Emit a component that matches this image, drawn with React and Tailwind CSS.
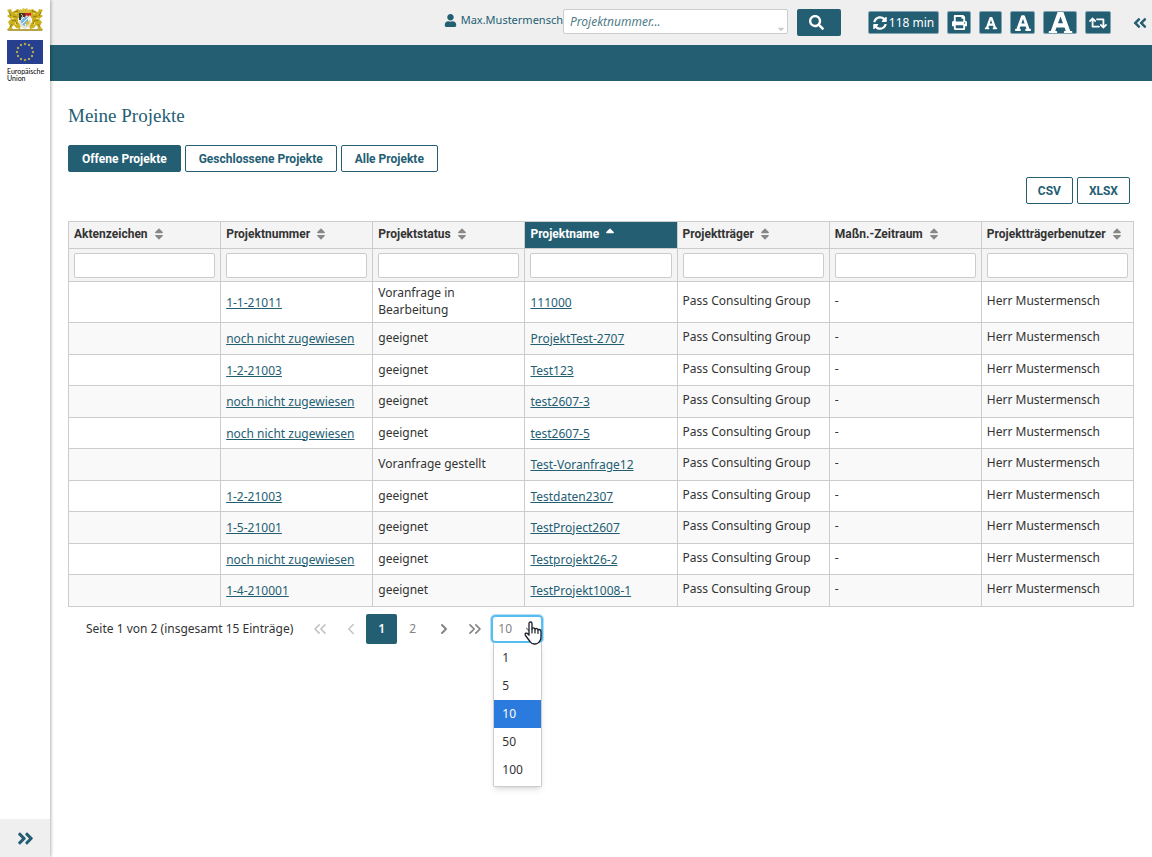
import React, { useState } from 'react';
import {
  FaUser,
  FaSearch,
  FaSyncAlt,
  FaPrint,
  FaRetweet,
  FaFont,
  FaAngleDoubleLeft,
  FaAngleDoubleRight,
  FaSort,
  FaSortUp,
  FaCaretDown,
} from 'react-icons/fa';
import { ChevronDown, ChevronLeft, ChevronRight, ChevronsLeft, ChevronsRight } from 'lucide-react';

const columns = [
  'Aktenzeichen',
  'Projektnummer',
  'Projektstatus',
  'Projektname',
  'Projektträger',
  'Maßn.-Zeitraum',
  'Projektträgerbenutzer',
];

const projects = [
  { number: '1-1-21011', status: 'Voranfrage in Bearbeitung', name: '111000' },
  { number: 'noch nicht zugewiesen', status: 'geeignet', name: 'ProjektTest-2707' },
  { number: '1-2-21003', status: 'geeignet', name: 'Test123' },
  { number: 'noch nicht zugewiesen', status: 'geeignet', name: 'test2607-3' },
  { number: 'noch nicht zugewiesen', status: 'geeignet', name: 'test2607-5' },
  { number: '', status: 'Voranfrage gestellt', name: 'Test-Voranfrage12' },
  { number: '1-2-21003', status: 'geeignet', name: 'Testdaten2307' },
  { number: '1-5-21001', status: 'geeignet', name: 'TestProject2607' },
  { number: 'noch nicht zugewiesen', status: 'geeignet', name: 'Testprojekt26-2' },
  { number: '1-4-210001', status: 'geeignet', name: 'TestProjekt1008-1' },
];

const pageSizes = [1, 5, 10, 50, 100];

const Lion = () => (
  <>
    <path
      d="M0 2 L4 1 L5 4 L8 3 L10 1 L13 2 L14 5 L12 7 L15 9 L14 11 L11 10 L11 14 L14 17 L13 21 L9 20 L7 17 L5 19 L6 22 L0 22 L3 18 L1 14 L4 11 L0 8 L3 6 Z"
      fill="#c9b01c"
    />
    <path d="M7 4 L11 3 M6 8 L10 9 M5 13 L8 12 L10 16 M3 19 L5 16 M2 4 L4 8" stroke="#8f7a16" strokeWidth="1" fill="none" />
    <path d="M8 5 L10 6 M4 10 L7 11 M8 14 L9 17" stroke="#f2e37a" strokeWidth="1" fill="none" />
  </>
);

const CoatOfArms = () => (
  <svg viewBox="0 0 36 24" className="w-9 h-6" role="img" aria-label="Bayerisches Staatswappen">
    <Lion />
    <g transform="translate(36 0) scale(-1 1)">
      <Lion />
    </g>
    <path d="M0 21 L36 21 L35 23 L1 23 Z" fill="#b6a34a" />
    <path d="M13 1 L15 2 L16 0 L18 1 L20 0 L21 2 L23 1 L23 5 L13 5 Z" fill="#d8bf3a" />
    <path d="M12 5 H24 V14 Q24 19 18 21 Q12 19 12 14 Z" fill="#e8e4d4" />
    <path d="M12 5 H18 V12 H12 Z" fill="#3b3a36" />
    <path d="M14 6 L16 8 L14 10" stroke="#d8bf3a" strokeWidth="1" fill="none" />
    <path d="M18 5 H24 V12 H18 Z" fill="#cc2222" />
    <path d="M18 9 L20 7 L21 9 L23 7 L24 9 V12 H18 Z" fill="#f4f0ee" />
    <path d="M14 9 H21 V14 Q20 17 17 18 Q14 16 14 14 Z" fill="#7cb9dd" />
    <path d="M14 12 L17 9 M15 16 L21 10 M18 17 L21 14" stroke="#fff" strokeWidth="1" />
    <path d="M19 14 L23 13 L22 16 L19 18 Z" fill="#d8bf3a" />
  </svg>
);

const stars = [
  [18, 4], [22, 5], [25, 8], [26, 12], [25, 16], [22, 19],
  [18, 20], [14, 19], [11, 16], [10, 12], [11, 8], [14, 5],
];

const EuFlag = () => (
  <svg viewBox="0 0 36 24" className="w-9 h-6" aria-hidden="true">
    <rect width="36" height="24" fill="#263f8f" />
    {stars.map(([x, y]) => (
      <path
        key={`${x}-${y}`}
        transform={`translate(${x} ${y})`}
        d="M0 -1.4 L.4 -.4 L1.4 -.4 L.6 .3 L.9 1.3 L0 .7 L-.9 1.3 L-.6 .3 L-1.4 -.4 L-.4 -.4 Z"
        fill="#f3dc2c"
      />
    ))}
  </svg>
);

const HandCursor = () => (
  <svg viewBox="0 0 18 24" className="absolute left-[33px] top-1.5 w-[18px] h-6 pointer-events-none z-20" aria-hidden="true">
    <path
      d="M5 2.5 Q5 1 6.5 1 Q8 1 8 2.5 V8 Q8 6.8 9.3 6.8 Q10.8 6.8 11 8.4 Q11.2 7.4 12.4 7.4 Q13.8 7.5 14 9.2 Q14.2 8.4 15.3 8.5 Q17 8.7 17 10.5 V16 Q17 19 15.5 20.5 Q14 23 10.5 23 Q7.5 23 6 20.5 L1.5 14.5 Q.6 12.8 1.8 12.2 Q3 11.7 4 13 L5 14.2 Z"
      fill="#fff"
      stroke="#1c1c28"
      strokeWidth="1.3"
      strokeLinejoin="round"
    />
    <path d="M8 8 V12 M11 8.5 V12 M14 9.5 V12.5" stroke="#1c1c28" strokeWidth="1.2" strokeLinecap="round" />
  </svg>
);

const toolButton = 'h-[23px] flex items-center justify-center rounded-xs border border-[#7fa3b0] bg-[#245e73] text-white overflow-hidden';
const outlineButton = "h-[27px] rounded-xs border border-[#245e73] font-['Roboto',sans-serif] font-bold";
const pageButton = 'w-[31px] h-[30px] flex items-center justify-center';

const Sidebar = () => (
  <aside className="w-[50px] shrink-0 flex flex-col bg-white shadow-[1px_0_3px_rgba(0,0,0,0.3)] z-10">
    <div className="pt-2 pl-[7px] flex flex-col gap-2">
      <CoatOfArms />
      <div>
        <EuFlag />
        <p className="mt-1 font-['Lato',sans-serif] text-[7px] leading-[7px] text-black">
          Europäische
          <br />
          Union
        </p>
      </div>
    </div>
    <button aria-label="Menü öffnen" className="mt-auto h-[38px] flex items-center justify-center bg-[#efefef] text-[#245e73]">
      <FaAngleDoubleRight size={19} />
    </button>
  </aside>
);

const Header = () => (
  <header>
    <div className="h-[45px] pr-1 flex items-center justify-end bg-[#efefef] text-[#245e73]">
      <FaUser size={13} className="mr-1 -mt-1" />
      <a href="#profil" className="text-[11px] -mt-1">Max.Mustermensch</a>
      <div className="relative mr-[9px] -mt-0.5">
        <input
          aria-label="Projektnummer"
          placeholder="Projektnummer..."
          className="block w-[225px] h-[25px] px-1.5 bg-white border border-[#ccc] rounded-xs text-xs italic placeholder:text-[#4f7c86]"
        />
        <FaCaretDown size={10} className="absolute right-0.5 bottom-0 text-[#ccc]" />
      </div>
      <button aria-label="Suchen" className="w-11 h-[27px] mr-[27px] pr-1.5 flex items-center justify-center rounded-xs bg-[#245e73] text-white">
        <FaSearch size={15} />
      </button>
      <button className={`${toolButton} w-[71px] mr-2 gap-0.5 text-xs`}>
        <FaSyncAlt size={14} className="shrink-0" />
        118 min
      </button>
      <button aria-label="Drucken" className={`${toolButton} w-6 mr-2`}>
        <FaPrint size={15} />
      </button>
      <button aria-label="Kleine Schrift" className={`${toolButton} w-[23px] mr-2`}>
        <FaFont size={14} className="shrink-0" />
      </button>
      <button aria-label="Mittlere Schrift" className={`${toolButton} w-[25px] mr-2`}>
        <FaFont size={18} className="shrink-0" />
      </button>
      <button aria-label="Große Schrift" className={`${toolButton} w-[34px] mr-2`}>
        <FaFont size={27} className="shrink-0" />
      </button>
      <button aria-label="Ansicht wechseln" className={`${toolButton} w-[26px] mr-[21px]`}>
        <FaRetweet size={18} className="shrink-0" />
      </button>
      <button aria-label="Einklappen">
        <FaAngleDoubleLeft size={16} />
      </button>
    </div>
    <div className="h-9 bg-[#245e73]" />
  </header>
);

const ProjectTable = () => {
  const cell = 'border border-[#ccc] px-[5px]';

  return (
    <table className="w-full table-fixed border-collapse leading-[17px]">
      <thead className="bg-[#f4f4f4]">
        <tr className="h-[27px]">
          {columns.map((col) => {
            const sorted = col === 'Projektname';
            return (
              <th
                key={col}
                aria-sort={sorted ? 'ascending' : 'none'}
                className={`${cell} text-left font-['Roboto',sans-serif] font-bold whitespace-nowrap ${sorted ? 'bg-[#245e73] text-white' : ''}`}
              >
                <button className="flex items-center gap-1 pb-0.5">
                  {col}
                  {sorted ? <FaSortUp size={14} /> : <FaSort size={14} className="text-[#888]" />}
                </button>
              </th>
            );
          })}
        </tr>
        <tr className="h-[33px]">
          {columns.map((col) => (
            <td key={col} className={cell}>
              <input
                aria-label={`${col} filtern`}
                className="block w-full h-[25px] px-1 bg-white border border-[#ccc] rounded-xs"
              />
            </td>
          ))}
        </tr>
      </thead>
      <tbody>
        {projects.map((project, i) => (
          <tr key={i} className="h-8 odd:h-[31px] odd:bg-white even:bg-[#f9f9f9]">
            <td className={cell}></td>
            <td className={cell}>
              {project.number && <a href="#projekt" className="text-[#245e73] underline">{project.number}</a>}
            </td>
            <td className={`${cell} pt-0.5 pb-1`}>{project.status}</td>
            <td className={cell}>
              <a href="#projekt" className="text-[#245e73] underline">{project.name}</a>
            </td>
            <td className={`${cell} pb-1`}>Pass Consulting Group</td>
            <td className={`${cell} pb-1`}>-</td>
            <td className={`${cell} pb-1`}>Herr Mustermensch</td>
          </tr>
        ))}
      </tbody>
    </table>
  );
};

const Paginator = () => {
  const [pageSize, setPageSize] = useState(10);

  return (
    <nav aria-label="Seiten" className="mt-[7px] pl-[18px] flex items-center text-[#848484]">
      <span className="mr-[11px] text-[#333]">Seite 1 von 2 (insgesamt 15 Einträge)</span>
      <button aria-label="Erste Seite" disabled className={`${pageButton} text-[#c4c4c4]`}>
        <ChevronsLeft size={20} />
      </button>
      <button aria-label="Vorherige Seite" disabled className={`${pageButton} text-[#c4c4c4]`}>
        <ChevronLeft size={18} />
      </button>
      <button className={`${pageButton} bg-[#245e73] text-white font-semibold rounded-xs`}>1</button>
      <button className={pageButton}>2</button>
      <button aria-label="Nächste Seite" className={pageButton}>
        <ChevronRight size={16} strokeWidth={3} />
      </button>
      <button aria-label="Letzte Seite" className={pageButton}>
        <ChevronsRight size={20} />
      </button>
      <div className="relative ml-px">
        <select
          aria-label="Einträge pro Seite"
          value={pageSize}
          onChange={(e) => setPageSize(Number(e.target.value))}
          className="block w-[52px] h-7 pl-[5px] appearance-none bg-white border-2 border-[#56bdf0] rounded-sm outline-1 outline-[#b5dff8]"
        >
          {pageSizes.map((size) => (
            <option key={size}>{size}</option>
          ))}
        </select>
        <ChevronDown size={14} className="absolute right-1.5 top-2" />
        <ul role="listbox" aria-label="Einträge pro Seite" className="absolute left-0.5 top-7 w-[49px] pt-px pb-0.5 bg-white border border-t-0 border-[#ccc] rounded-b-xs shadow-md text-[#333]">
          {pageSizes.map((size) => (
            <li
              key={size}
              role="option"
              aria-selected={size === pageSize}
              onClick={() => setPageSize(size)}
              className={`h-7 pl-2 flex items-center ${size === pageSize ? 'bg-[#2b7ade] text-white' : ''}`}
            >
              {size}
            </li>
          ))}
        </ul>
        <HandCursor />
      </div>
    </nav>
  );
};

const App = () => {
  const [filter, setFilter] = useState('Offene Projekte');

  return (
    <div className="min-h-screen flex bg-white font-['Noto_Sans',sans-serif] text-xs text-[#333]">
      <Sidebar />
      <div className="flex-1 min-w-0">
        <Header />
        <main className="px-[18px] pt-6">
          <h1 className="font-['Liberation_Serif',serif] text-[19px] leading-[22px] text-[#245e73]">Meine Projekte</h1>
          <div className="mt-[18px] flex gap-1">
            {['Offene Projekte', 'Geschlossene Projekte', 'Alle Projekte'].map((label) => (
              <button
                key={label}
                onClick={() => setFilter(label)}
                className={`${outlineButton} px-[13px] ${filter === label ? 'bg-[#245e73] text-white' : 'text-[#245e73]'}`}
              >
                {label}
              </button>
            ))}
          </div>
          <div className="mt-[5px] mb-[17px] pr-1 flex justify-end gap-1 text-[#245e73]">
            <button className={`${outlineButton} px-[11px]`}>CSV</button>
            <button className={`${outlineButton} px-[11px]`}>XLSX</button>
          </div>
          <ProjectTable />
          <Paginator />
        </main>
      </div>
    </div>
  );
};

export default App;
